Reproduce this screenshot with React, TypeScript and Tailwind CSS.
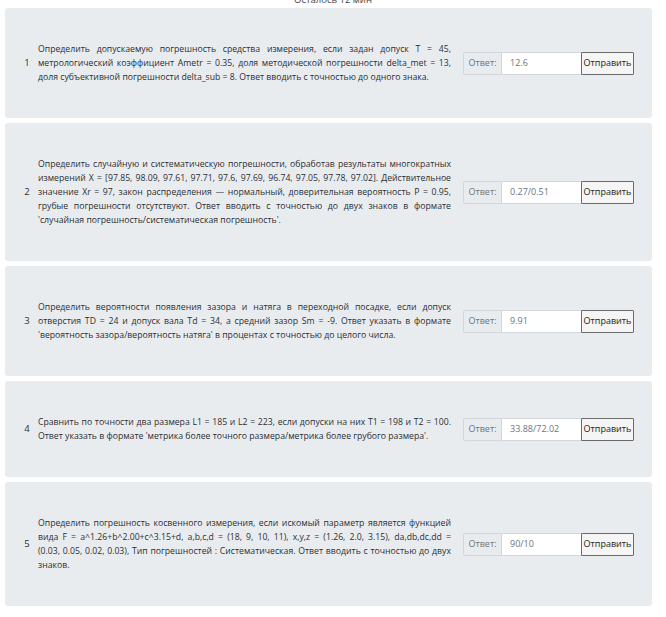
import React from "react";

const tasks = [
  {
    n: 1,
    lines: [
      "Определить допускаемую погрешность средства измерения, если задан допуск T = 45,",
      "метрологический коэффициент Ametr = 0.35, доля методической погрешности delta_met = 13,",
      "доля субъективной погрешности delta_sub = 8. Ответ вводить с точностью до одного знака.",
    ],
    ans: "12.6",
  },
  {
    n: 2,
    lines: [
      "Определить случайную и систематическую погрешности, обработав результаты многократных",
      "измерений X = [97.85, 98.09, 97.61, 97.71, 97.6, 97.69, 96.74, 97.05, 97.78, 97.02]. Действительное",
      "значение Xr = 97, закон распределения — нормальный, доверительная вероятность P = 0.95,",
      "грубые погрешности отсутствуют. Ответ вводить с точностью до двух знаков в формате",
      "'случайная погрешность/систематическая погрешность'.",
    ],
    ans: "0.27/0.51",
  },
  {
    n: 3,
    lines: [
      "Определить вероятности появления зазора и натяга в переходной посадке, если допуск",
      "отверстия TD = 24 и допуск вала Td = 34, а средний зазор Sm = -9. Ответ указать в формате",
      "'вероятность зазора/вероятность натяга' в процентах с точностью до целого числа.",
    ],
    ans: "9.91",
  },
  {
    n: 4,
    lines: [
      "Сравнить по точности два размера L1 = 185 и L2 = 223, если допуски на них T1 = 198 и T2 = 100.",
      "Ответ указать в формате 'метрика более точного размера/метрика более грубого размера'.",
    ],
    ans: "33.88/72.02",
  },
  {
    n: 5,
    lines: [
      "Определить погрешность косвенного измерения, если искомый параметр является функцией",
      "вида F = a^1.26+b^2.00+c^3.15+d, a,b,c,d = (18, 9, 10, 11), x,y,z = (1.26, 2.0, 3.15), da,db,dc,dd =",
      "(0.03, 0.05, 0.02, 0.03), Тип погрешностей : Систематическая. Ответ вводить с точностью до двух",
      "знаков.",
    ],
    ans: "90/10",
  },
];

export default function App() {
  return (
    <div
      className="w-[666px] h-[617px] bg-white overflow-hidden text-[#2b2f33]"
      style={{ fontFamily: "'Open Sans', 'Noto Sans', sans-serif" }}
    >
      <div className="h-[8px] relative">
        <div className="absolute left-0 right-0 top-[-7px] text-center text-[9.5px] leading-[14px] text-[#444]">
          Осталось 12 мин
        </div>
      </div>
      <div className="flex flex-col gap-[5px] ml-[5px] w-[647px]">
        {tasks.map((t) => (
          <div
            key={t.n}
            className="bg-[#e9ecef] rounded-[3px] py-[34px] flex items-center"
          >
            <div className="w-[28px] pl-[16px] text-[9.5px] text-center shrink-0">{t.n}</div>
            <div className="w-[413px] shrink-0 ml-[5px] text-[8.7px] leading-[14px]">
              {t.lines.map((l, i) => (
                <div
                  key={i}
                  className={
                    i < t.lines.length - 1
                      ? "whitespace-nowrap text-justify [text-align-last:justify]"
                      : "whitespace-nowrap text-left"
                  }
                >
                  {l}
                </div>
              ))}
            </div>
            <div className="ml-[12px] flex h-[23px] text-[9px]">
              <div className="w-[39px] flex items-center justify-center border border-[#d3d7db] bg-[#e9ecef] text-[#6c757d] rounded-l-[2px]">
                Ответ:
              </div>
              <div className="w-[79px] flex items-center pl-[8px] bg-white border-y border-[#d3d7db] text-[#6c757d]">
                {t.ans}
              </div>
              <div className="w-[53px] flex items-center justify-center border border-[#6b6b6b] bg-[#f5f5f5] text-[#222] rounded-r-[1px]">
                Отправить
              </div>
            </div>
          </div>
        ))}
      </div>
    </div>
  );
}
